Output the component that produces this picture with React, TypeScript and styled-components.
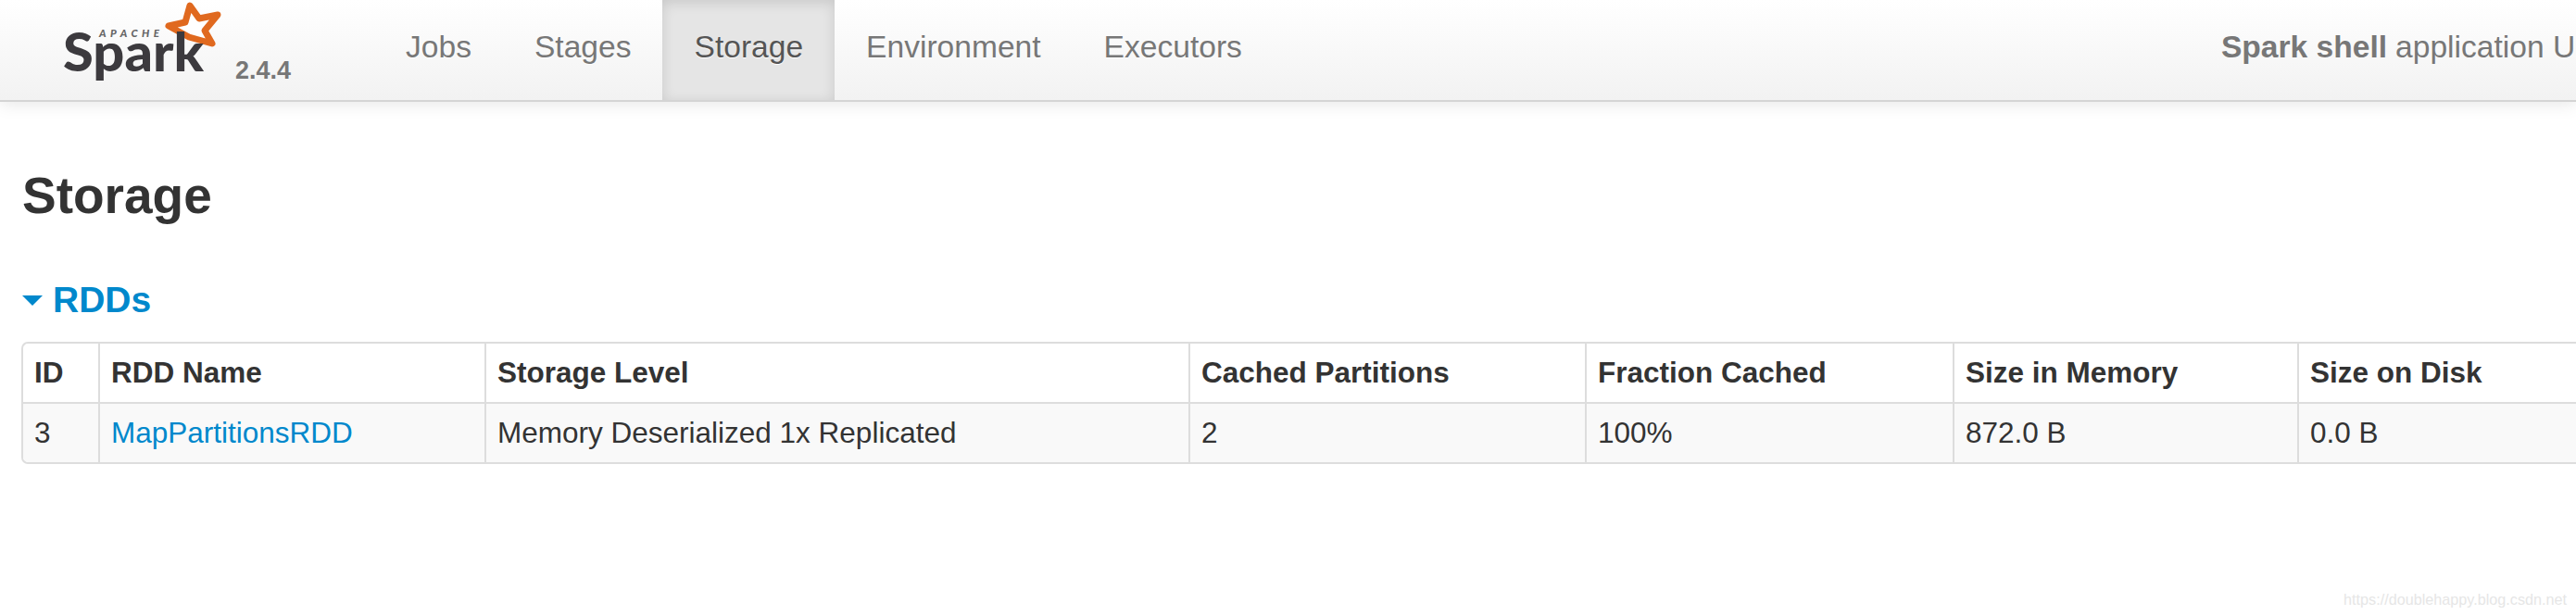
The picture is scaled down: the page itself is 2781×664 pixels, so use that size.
import React from "react";
import styled, { createGlobalStyle } from "styled-components";

const GlobalStyle = createGlobalStyle`
  html, body {
    margin: 0;
    padding: 0;
    background: #ffffff;
    overflow: hidden;
  }
`;

const Page = styled.div`
  position: relative;
  width: 2781px;
  height: 664px;
  overflow: hidden;
  font-family: "Liberation Sans", Arial, sans-serif;
  color: #333333;
`;

const Navbar = styled.nav`
  display: flex;
  align-items: stretch;
  height: 108px;
  background: linear-gradient(to bottom, #ffffff, #f2f2f2);
  border-bottom: 2px solid #d4d4d4;
  box-shadow: 0 2px 18px rgba(0, 0, 0, 0.1);
  overflow: hidden;
`;

const Brand = styled.a`
  display: flex;
  width: 404px;
  flex-shrink: 0;
`;

const LogoSvg = styled.svg`
  display: block;
  width: 404px;
  height: 108px;
`;

const Tab = styled.a<{ $active?: boolean }>`
  display: flex;
  align-items: center;
  padding: 0 34px;
  padding-bottom: 7px;
  font-size: 33.6px;
  flex-shrink: 0;
  color: ${(p) => (p.$active ? "#555555" : "#777777")};
  text-shadow: 0 1px 0 #ffffff;
  background: ${(p) => (p.$active ? "#e5e5e5" : "transparent")};
  box-shadow: ${(p) => (p.$active ? "inset 0 3px 14px rgba(0, 0, 0, 0.125)" : "none")};
`;

const AppName = styled.p`
  display: flex;
  align-items: center;
  gap: 9px;
  margin: 0 0 7px 1023px;
  font-size: 33.6px;
  color: #777777;
  white-space: nowrap;
  flex-shrink: 0;
`;

const Content = styled.main`
  padding: 0 0 0 23px;
`;

const Title = styled.h3`
  margin: 70px 0 0 1px;
  font-size: 55px;
  line-height: 62px;
  font-weight: bold;
  color: #333333;
`;

const Section = styled.h4`
  display: flex;
  align-items: center;
  gap: 11px;
  margin: 60px 0 0 1px;
  font-size: 39px;
  line-height: 44px;
  font-weight: bold;
  color: #0088cc;
`;

const Caret = styled.span`
  width: 0;
  height: 0;
  border-left: 11px solid transparent;
  border-right: 11px solid transparent;
  border-top: 11px solid #0088cc;
`;

const Table = styled.table`
  width: 2780px;
  margin-top: 23px;
  table-layout: fixed;
  border-collapse: separate;
  border-spacing: 0;
  border: 2px solid #dddddd;
  border-right: 0;
  border-radius: 7px 0 0 7px;
  font-size: 31.5px;
`;

const HeadCell = styled.th`
  height: 65px;
  box-sizing: border-box;
  padding: 0 12px;
  text-align: left;
  font-weight: bold;
  white-space: nowrap;
  border-left: 2px solid #dddddd;
  border-bottom: 2px solid #dddddd;
  &:first-child {
    border-left: 0;
  }
`;

const Cell = styled.td`
  height: 63px;
  box-sizing: border-box;
  padding: 0 12px;
  white-space: nowrap;
  background: #f9f9f9;
  border-left: 2px solid #dddddd;
  &:first-child {
    border-left: 0;
    border-bottom-left-radius: 6px;
  }
`;

const RddLink = styled.a`
  color: #0088cc;
`;

const Watermark = styled.span`
  position: absolute;
  right: 10px;
  bottom: 7px;
  font-size: 16.2px;
  color: #e6e6e6;
`;

const columns = [
  { label: "ID", width: 81, value: "3" },
  { label: "RDD Name", width: 417, value: "MapPartitionsRDD", link: true },
  { label: "Storage Level", width: 760, value: "Memory Deserialized 1x Replicated" },
  { label: "Cached Partitions", width: 428, value: "2" },
  { label: "Fraction Cached", width: 397, value: "100%" },
  { label: "Size in Memory", width: 372, value: "872.0 B" },
  { label: "Size on Disk", width: 325, value: "0.0 B" },
];

const tabs = ["Jobs", "Stages", "Storage", "Environment", "Executors"];

const Logo = () => (
  <LogoSvg viewBox="0 0 404 108">
    <path
      d="M205 6 L215 20 L235 16 L221 33 L229 47 L204 40 L182 28 L200 24 Z"
      fill="#ffffff"
      stroke="#e0691f"
      strokeWidth="7"
      strokeLinejoin="round"
    />
    <text x="107" y="40" fontFamily="Lato, sans-serif" fontStyle="italic" fontWeight="900" fontSize="11.5" textLength="65" fill="#666666">
      APACHE
    </text>
    <text x="68" y="77" fontFamily="Lato, sans-serif" fontWeight="900" fontSize="58" textLength="152" lengthAdjust="spacingAndGlyphs" fill="#3c3a3e">
      Spark
    </text>
    <text x="254" y="85" fontFamily="Liberation Sans, sans-serif" fontWeight="700" fontSize="27" fill="#777777">
      2.4.4
    </text>
  </LogoSvg>
);

const App = () => {
  return (
    <Page>
      <GlobalStyle />
      <Navbar>
        <Brand>
          <Logo />
        </Brand>
        {tabs.map((t) => (
          <Tab key={t} $active={t === "Storage"}>
            {t}
          </Tab>
        ))}
        <AppName>
          <strong>Spark shell</strong>
          <span>application UI</span>
        </AppName>
      </Navbar>
      <Content>
        <Title>Storage</Title>
        <Section>
          <Caret />
          RDDs
        </Section>
        <Table>
          <colgroup>
            {columns.map((c) => (
              <col key={c.label} width={c.width} />
            ))}
          </colgroup>
          <thead>
            <tr>
              {columns.map((c) => (
                <HeadCell key={c.label}>{c.label}</HeadCell>
              ))}
            </tr>
          </thead>
          <tbody>
            <tr>
              {columns.map((c) => (
                <Cell key={c.label}>{c.link ? <RddLink>{c.value}</RddLink> : c.value}</Cell>
              ))}
            </tr>
          </tbody>
        </Table>
      </Content>
      <Watermark>https://doublehappy.blog.csdn.net</Watermark>
    </Page>
  );
};

export default App;
